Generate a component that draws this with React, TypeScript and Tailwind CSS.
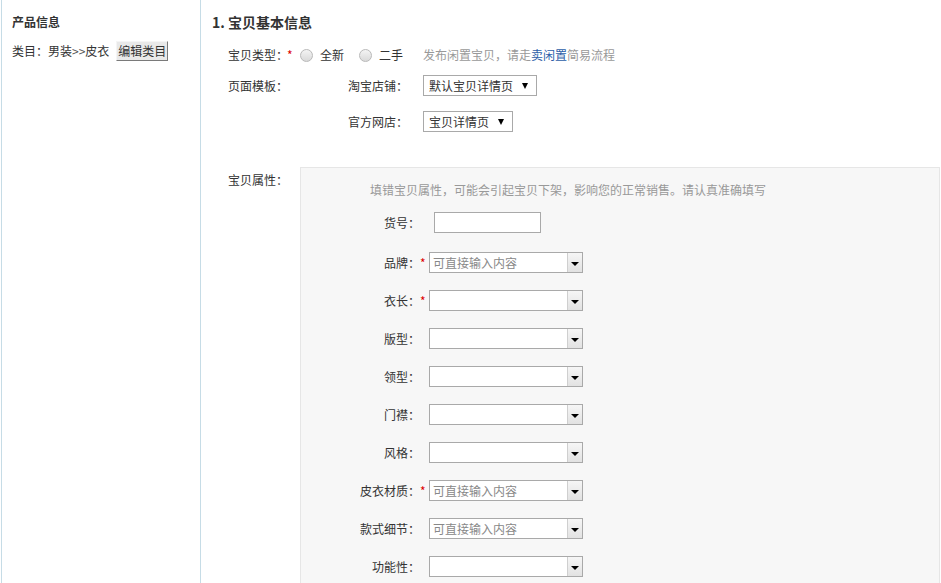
import React from 'react';

const attrs = [
  { label: '品牌：', required: true, placeholder: '可直接输入内容' },
  { label: '衣长：', required: true, placeholder: '' },
  { label: '版型：', required: false, placeholder: '' },
  { label: '领型：', required: false, placeholder: '' },
  { label: '门襟：', required: false, placeholder: '' },
  { label: '风格：', required: false, placeholder: '' },
  { label: '皮衣材质：', required: true, placeholder: '可直接输入内容' },
  { label: '款式细节：', required: false, placeholder: '可直接输入内容' },
  { label: '功能性：', required: false, placeholder: '' },
];

function Radio({ label }: { label: string }) {
  return (
    <label className="flex items-center shrink-0">
      <span className="w-[13px] h-[13px] rounded-full border border-[#b9b9b9] bg-gradient-to-b from-[#f4f4f4] to-[#d9d9d9]" />
      <span className="ml-[7px]">{label}</span>
    </label>
  );
}

function Combo({ placeholder }: { placeholder: string }) {
  return (
    <div className="flex w-[154px] h-[21px] border border-[#a9a9a9] bg-white">
      <div className="flex-1 pl-[3px] leading-[19px] text-[#888]">{placeholder}</div>
      <div className="w-[15px] border-l border-[#cfcfcf] bg-gradient-to-b from-[#f6f6f6] to-[#e2e2e2] flex items-center justify-center">
        <span className="w-0 h-0 border-x-[4px] border-x-transparent border-t-[4px] border-t-black mt-[2px]" />
      </div>
    </div>
  );
}

function Select({ value, width }: { value: string; width: string }) {
  return (
    <div className={`${width} h-[21px] border border-[#a9a9a9] bg-white flex items-center pl-[5px] whitespace-nowrap`}>
      <span>{value}</span>
      <span className="ml-[9px] w-0 h-0 border-x-[3px] border-x-transparent border-t-[6px] border-t-black" />
    </div>
  );
}

export default function App() {
  return (
    <div className="flex min-h-[583px] bg-white text-[12px] text-[#333] font-['Noto_Sans_CJK_SC','Microsoft_YaHei',sans-serif]">
      {/* Left panel */}
      <div className="ml-px w-[200px] shrink-0 border-x border-[#c6dce6] pl-[10px] pt-[13px]">
        <h2 className="font-bold leading-[18px]">产品信息</h2>
        <div className="mt-[10px] flex items-center whitespace-nowrap">
          <span>类目：男装<span className="text-[#555]">&gt;&gt;</span>皮衣</span>
          <button className="ml-[7px] h-[20px] px-[1px] bg-[#e9e9e9] border border-t-[#f5f5f5] border-l-[#f5f5f5] border-b-[#7a7a7a] border-r-[#7a7a7a] leading-[16px]">
            编辑类目
          </button>
        </div>
      </div>

      {/* Main */}
      <div className="flex-1 pl-[11px] pt-[12px]">
        <h1 className="text-[14px] font-bold leading-[20px]">1. 宝贝基本信息</h1>

        <div className="pl-[16px]">
          <div className="mt-[13px] flex items-center h-[20px] whitespace-nowrap">
            <span className="w-[58px] shrink-0">宝贝类型：</span>
            <span className="text-[#d00] w-[14px] shrink-0 pl-[1px]">*</span>
            <Radio label="全新" />
            <span className="w-[15px] shrink-0" />
            <Radio label="二手" />
            <span className="ml-[20px] text-[#999]">
              发布闲置宝贝，请走<a className="text-[#2c5ea8]">卖闲置</a>简易流程
            </span>
          </div>

          <div className="mt-[10px] flex items-center h-[21px] whitespace-nowrap">
            <span className="w-[120px] shrink-0">页面模板：</span>
            <span className="w-[75px] shrink-0">淘宝店铺：</span>
            <Select value="默认宝贝详情页" width="w-[114px]" />
          </div>
          <div className="mt-[15px] flex items-center h-[21px] whitespace-nowrap">
            <span className="w-[120px] shrink-0" />
            <span className="w-[75px] shrink-0">官方网店：</span>
            <Select value="宝贝详情页" width="w-[90px]" />
          </div>

          <div className="mt-[35px] flex">
            <span className="w-[72px] shrink-0 pt-[4px] whitespace-nowrap">宝贝属性：</span>
            <div className="flex-1 mr-px bg-[#f7f7f7] border-t border-l border-r border-[#e6e6e6] pt-[13px] pb-[20px] min-h-[420px]">
              <p className="pl-[69px] text-[#999] leading-[18px] whitespace-nowrap">
                填错宝贝属性，可能会引起宝贝下架，影响您的正常销售。请认真准确填写
              </p>
              <div className="mt-[13px] flex flex-col gap-[17px]">
                <div className="flex items-center h-[21px] mb-[2px]">
                  <span className="w-[119px] shrink-0 text-right">货号：</span>
                  <span className="w-[14px] shrink-0" />
                  <div className="w-[107px] h-[21px] border border-[#a9a9a9] bg-white" />
                </div>
                {attrs.map((a) => (
                  <div key={a.label} className="flex items-center h-[21px] whitespace-nowrap">
                    <span className="w-[119px] shrink-0 text-right">{a.label}</span>
                    <span className="w-[9px] shrink-0 text-[#d00]">{a.required ? '*' : ''}</span>
                    <Combo placeholder={a.placeholder} />
                  </div>
                ))}
              </div>
            </div>
          </div>
        </div>
      </div>
    </div>
  );
}
